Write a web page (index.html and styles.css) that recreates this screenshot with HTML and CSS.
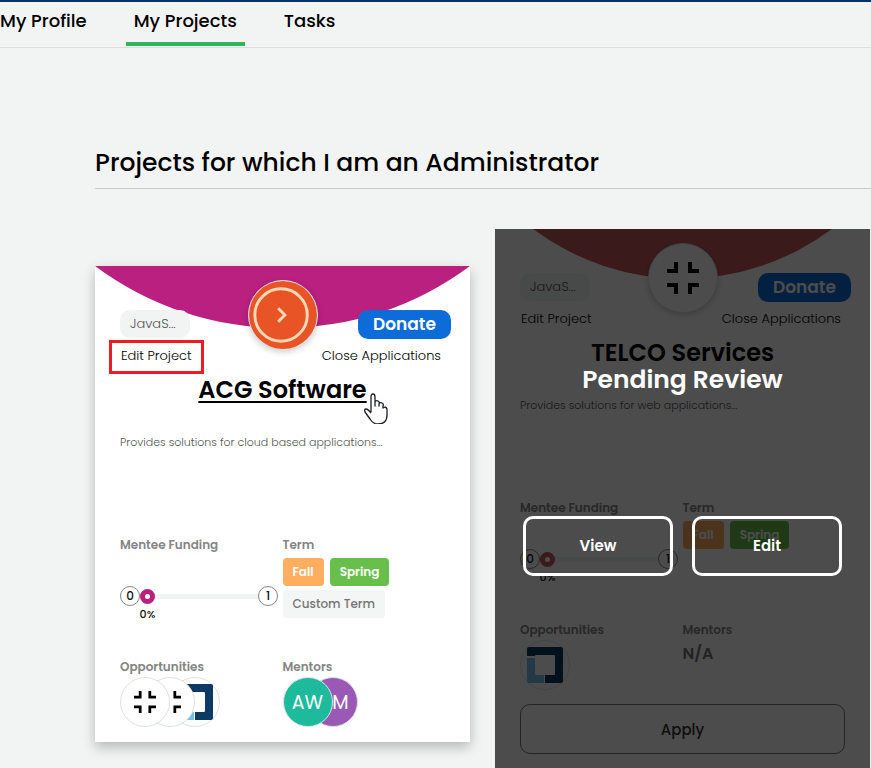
FILE: index.html
```html
<!DOCTYPE html>
<html lang="en">
<head>
<meta charset="utf-8">
<meta name="viewport" content="width=device-width, initial-scale=1">
<title>My Projects</title>
<link rel="stylesheet" href="styles.css">
</head>
<body>
<svg class="defs" aria-hidden="true">
  <symbol id="compress" viewBox="0 0 32 32">
    <path d="M7 0h4v11H0V7h7zM21 0h4v7h7v4H21zM0 21h11v11H7v-7H0zM21 21h11v4h-7v7h-4z"/>
  </symbol>
  <symbol id="square-logo" viewBox="0 0 36 36">
    <path fill="#0c3a63" d="M2 0h32q2 0 2 2v32q0 2-2 2H18v-8h9q1 0 1-1V9q0-1-1-1H9q-1 0-1 1H0V2q0-2 2-2z"/>
    <path fill="#75bfee" d="M0 11h8v16q0 1 1 1h8v8H2q-2 0-2-2z"/>
  </symbol>
</svg>
<header class="topbar">
  <nav class="tabs">
    <a class="tab" href="#profile">My Profile</a>
    <a class="tab active" href="#projects" aria-current="page">My Projects</a>
    <a class="tab" href="#tasks">Tasks</a>
  </nav>
</header>
<main class="page">
  <h1 class="page-title">Projects for which I am an Administrator</h1>
  <div class="cards">
    <article class="card selected">
      <svg class="arc" viewBox="0 0 375 62" aria-hidden="true"><path fill="#ba2080" d="M0 0A314 314 0 0 0 375 0z"/></svg>
      <div class="avatar">
        <svg viewBox="0 0 70 70" aria-hidden="true">
          <circle cx="35" cy="35" r="35" fill="#e85426"/>
          <circle cx="33" cy="35" r="27" fill="none" stroke="#fbd9b5" stroke-width="3"/>
          <path d="M30 28l7 7-7 7" fill="none" stroke="#fbd9b5" stroke-width="3"/>
        </svg>
      </div>
      <div class="row top">
        <span class="tag">JavaS...</span>
        <button class="donate">Donate</button>
      </div>
      <div class="row links">
        <a class="edit-link marked" href="#edit">Edit Project</a>
        <a href="#close">Close Applications</a>
      </div>
      <h2 class="name"><a class="name-link" href="#acg">ACG Software<svg class="pointer" viewBox="0 0 24 31" aria-hidden="true"><path d="M8 19V4q0-3 2-3t2 3v9V9q1-2 3-1t1 3v2-2q1-2 3-1t1 3v2q3-2 4 1v6q0 9-9 9-5 0-8-5l-5-7q-1-3 1-3 2 0 5 4" transform="translate(-1 0)" fill="#fff" stroke="#1b1b2f" stroke-width="1.3" stroke-linejoin="round"/></svg></a></h2>
      <p class="desc">Provides solutions for cloud based applications...</p>
      <div class="grid stats">
        <section>
          <h3>Mentee Funding</h3>
          <div class="funding">
            <span class="bound">0</span>
            <span class="track"><span class="dot"></span></span>
            <span class="bound">1</span>
          </div>
          <div class="percent">0%</div>
        </section>
        <section>
          <h3>Term</h3>
          <div class="terms"><span class="term fall">Fall</span><span class="term spring">Spring</span><span class="term custom">Custom Term</span></div>
        </section>
      </div>
      <div class="grid people">
        <section>
          <h3>Opportunities</h3>
          <div class="stack">
            <span class="bubble"><svg class="small-icon"><use href="#compress"/></svg></span>
            <span class="bubble"><svg class="small-icon"><use href="#compress"/></svg></span>
            <span class="bubble"><svg class="logo-icon"><use href="#square-logo"/></svg></span>
          </div>
        </section>
        <section>
          <h3>Mentors</h3>
          <div class="stack">
            <span class="bubble aw">AW</span>
            <span class="bubble m">M</span>
          </div>
        </section>
      </div>
    </article>

    <article class="card pending">
      <svg class="arc" viewBox="0 0 375 62" aria-hidden="true"><path fill="#c5595c" d="M38 0A250 250 0 0 0 337 0z"/></svg>
      <div class="avatar"><svg class="large-icon"><use href="#compress"/></svg></div>
      <div class="row top">
        <span class="tag">JavaS...</span>
        <button class="donate">Donate</button>
      </div>
      <div class="row links">
        <a class="edit-link" href="#edit">Edit Project</a>
        <a href="#close">Close Applications</a>
      </div>
      <h2 class="name">TELCO Services</h2>
      <p class="desc">Provides solutions for web applications...</p>
      <div class="grid stats">
        <section>
          <h3>Mentee Funding</h3>
          <div class="funding">
            <span class="bound">0</span>
            <span class="track"><span class="dot red"></span></span>
            <span class="bound">1</span>
          </div>
          <div class="percent">0%</div>
        </section>
        <section>
          <h3>Term</h3>
          <div class="terms"><span class="term fall">Fall</span><span class="term spring">Spring</span></div>
        </section>
      </div>
      <div class="grid people">
        <section>
          <h3>Opportunities</h3>
          <div class="stack">
            <span class="bubble"><svg class="logo-icon"><use href="#square-logo"/></svg></span>
          </div>
        </section>
        <section>
          <h3>Mentors</h3>
          <div class="none">N/A</div>
        </section>
      </div>
      <button class="apply">Apply</button>
      <div class="overlay">
        <strong class="status">Pending Review</strong>
        <div class="actions">
          <button class="action">View</button>
          <button class="action">Edit</button>
        </div>
      </div>
    </article>
  </div>
</main>
</body>
</html>
```
FILE: styles.css
```css
* { box-sizing: border-box; }

body {
  margin: 0;
  background: #f2f4f4;
  color: #000;
  font-family: Poppins, Inter, "Open Sans", sans-serif;
  font-size: 12px;
  overflow-x: hidden;
}

a { color: inherit; text-decoration: none; }
button { font-family: inherit; cursor: pointer; }
h1, h2, h3, p { margin: 0; }
.defs { display: none; }

.topbar {
  border-top: 2px solid #003366;
  border-bottom: 1px solid #dcdfe1;
}
.tabs {
  display: flex;
  gap: 31px;
  margin-left: -8px;
}
.tab {
  height: 45px;
  padding: 6px 8px 0;
  font-size: 18px;
  font-weight: 500;
  line-height: 26px;
}
.tab.active {
  height: 44px;
  border-bottom: 4px solid #2fb457;
}

.page { padding: 94px 0 25px 95px; }
.page-title {
  padding: 1px 0 5px;
  border-bottom: 1px solid #c6cac9;
  font-size: 25px;
  font-weight: 500;
  line-height: 40px;
}
.cards {
  display: grid;
  grid-template-columns: repeat(auto-fill, minmax(350px, 1fr));
  align-items: start;
  gap: 25px;
  padding: 40px 1px 0 0;
}

.card {
  position: relative;
  padding: 44px 25px 15px;
  background: #fff;
  box-shadow: 0 5px 12px rgba(0, 0, 0, 0.25);
}
.card.selected { margin-top: 37px; }
.card.pending { padding-bottom: 25px; box-shadow: none; }

.arc { position: absolute; top: 0; left: 0; width: 100%; }
.avatar {
  position: absolute;
  top: 14px;
  left: 50%;
  display: flex;
  align-items: center;
  justify-content: center;
  width: 70px;
  height: 70px;
  margin-left: -35px;
  border: 1px solid #dde2e6;
  border-radius: 50%;
  background: #fff;
  box-shadow: 0 2px 6px rgba(0, 0, 0, 0.2);
}
.avatar svg { width: 100%; height: 100%; }
.avatar .large-icon { width: 32px; height: 32px; }

.row { display: flex; justify-content: space-between; }
.top { position: relative; height: 29px; margin-right: -6px; }
.tag {
  height: 28px;
  padding: 0 14px 0 10px;
  border-radius: 10px;
  background: #f2f4f4;
  color: #555;
  font-size: 13px;
  font-weight: 300;
  line-height: 28px;
}
.donate {
  width: 93px;
  padding: 0;
  border: 0;
  border-radius: 10px;
  background: #0d6cd8;
  color: #fff;
  font-size: 17px;
  font-weight: 600;
  line-height: 29px;
}
.links {
  padding: 6px 4px 0 1px;
  font-size: 13px;
  font-weight: 300;
  line-height: 22px;
}
.edit-link { position: relative; }
.marked::after {
  content: "";
  position: absolute;
  inset: -5px -12px -7px -12px;
  border: 3px solid #ed1c24;
}

.name {
  margin-top: 5px;
  font-size: 24px;
  font-weight: 600;
  line-height: 36px;
  text-align: center;
}
.name-link {
  position: relative;
  text-decoration: underline;
  text-decoration-thickness: 2px;
  text-underline-offset: 3px;
}
.pointer {
  position: absolute;
  top: 20px;
  left: 100%;
  width: 24px;
  height: 31px;
  margin-left: -3px;
}
.desc {
  height: 103px;
  margin-top: 24px;
  color: #555;
  font-size: 11px;
  font-weight: 300;
  line-height: 20px;
}

.grid { display: grid; grid-template-columns: 1fr 1fr; }
h3 {
  color: #858585;
  font-size: 12px;
  font-weight: 600;
  line-height: 20px;
}
.stats { height: 122px; }
.funding {
  display: flex;
  align-items: center;
  width: 158px;
  margin-top: 31px;
}
.bound {
  width: 20px;
  height: 20px;
  border: 1px solid #858585;
  border-radius: 50%;
  color: #111;
  font-weight: 500;
  line-height: 18px;
  text-align: center;
}
.track {
  display: flex;
  flex: 1;
  align-items: center;
  height: 5px;
  background: #f2f4f4;
}
.dot {
  width: 15px;
  height: 15px;
  border: 5px solid #ba2080;
  border-radius: 50%;
  background: #fff;
}
.dot.red { border-color: #c5595c; }
.percent {
  width: 55px;
  color: #111;
  font-size: 11px;
  font-weight: 500;
  line-height: 16px;
  text-align: center;
}
.terms { display: flex; flex-wrap: wrap; gap: 4px 6px; padding-top: 3px; }
.term {
  padding: 0 10px;
  border-radius: 4px;
  color: #fff;
  font-weight: 600;
  line-height: 28px;
}
.fall { background: #ffad5f; }
.spring { background: #69bf4b; }
.custom { background: #f4f6f6; color: #747474; font-weight: 500; }

.stack { display: flex; }
.bubble {
  display: flex;
  align-items: center;
  justify-content: center;
  width: 50px;
  height: 50px;
  margin-right: -25px;
  border: 1px solid #dde2e6;
  border-radius: 50%;
  background: #fff;
  color: #fff;
  font-size: 19px;
}
.bubble:nth-child(1) { z-index: 3; }
.bubble:nth-child(2) { z-index: 2; }
.small-icon { width: 22px; height: 22px; }
.logo-icon { width: 36px; height: 36px; }
.aw { background: #1dbb9b; }
.m { justify-content: flex-end; padding-right: 8px; background: #9b59b6; }
.none { color: #747474; font-size: 16px; font-weight: 600; line-height: 28px; }

.apply {
  width: 100%;
  height: 50px;
  margin-top: 14px;
  border: 1px solid #777;
  border-radius: 10px;
  background: transparent;
  color: #333;
  font-size: 15px;
  font-weight: 500;
}
.overlay {
  position: absolute;
  inset: 0;
  z-index: 5;
  padding: 133px 28px 0;
  background: rgba(0, 0, 0, 0.7);
  color: #fff;
  text-align: center;
}
.status { display: block; font-size: 25px; font-weight: 600; line-height: 36px; }
.actions { display: flex; gap: 19px; margin-top: 118px; }
.action {
  flex: 1;
  height: 60px;
  padding: 0 6px 2px;
  border: 3px solid #fff;
  border-radius: 10px;
  background: transparent;
  color: #fff;
  font-size: 15px;
  font-weight: 600;
}
```
